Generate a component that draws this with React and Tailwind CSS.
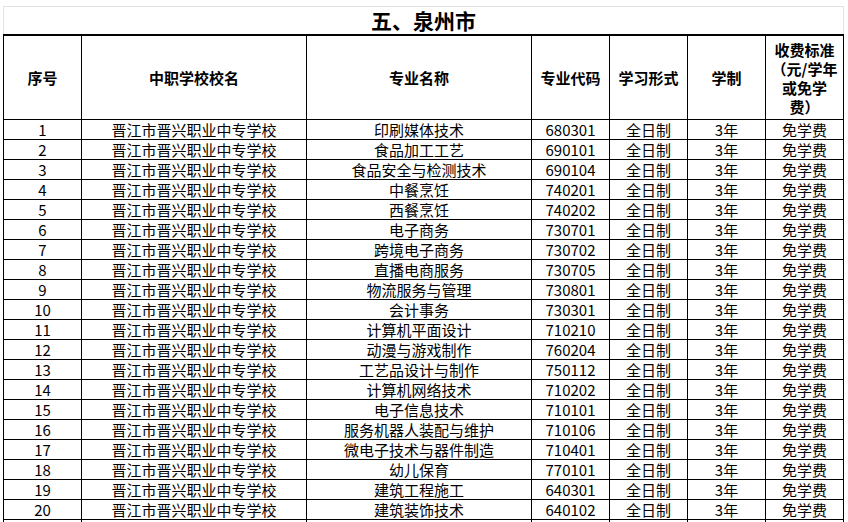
import React from "react";

const rows = [
  ["印刷媒体技术", "680301"],
  ["食品加工工艺", "690101"],
  ["食品安全与检测技术", "690104"],
  ["中餐烹饪", "740201"],
  ["西餐烹饪", "740202"],
  ["电子商务", "730701"],
  ["跨境电子商务", "730702"],
  ["直播电商服务", "730705"],
  ["物流服务与管理", "730801"],
  ["会计事务", "730301"],
  ["计算机平面设计", "710210"],
  ["动漫与游戏制作", "760204"],
  ["工艺品设计与制作", "750112"],
  ["计算机网络技术", "710202"],
  ["电子信息技术", "710101"],
  ["服务机器人装配与维护", "710106"],
  ["微电子技术与器件制造", "710401"],
  ["幼儿保育", "770101"],
  ["建筑工程施工", "640301"],
  ["建筑装饰技术", "640102"],
];

const font = { fontFamily: '"Noto Sans CJK SC", "Noto Sans", sans-serif' };

function Cell({ children, className = "" }) {
  return (
    <div
      className={`flex items-center justify-center border-r border-b border-black text-center ${className}`}
    >
      {children}
    </div>
  );
}

export default function App() {
  return (
    <div className="w-[848px] h-[522px] overflow-hidden bg-white text-black" style={font}>
      <div className="ml-[3px] mt-[6px] w-[841px]">
        <div className="h-[28px] border-t border-x border-[#e3e3e3] flex items-center justify-center text-[21px] leading-none font-bold">
          五、泉州市
        </div>
        <div className="grid grid-cols-[78px_225px_225px_78px_78px_78px_78px] border-t-2 border-l border-black">
          <Cell className="h-[84px] text-[15px] leading-none font-bold">序号</Cell>
          <Cell className="h-[84px] text-[15px] leading-none font-bold">中职学校校名</Cell>
          <Cell className="h-[84px] text-[15px] leading-none font-bold">专业名称</Cell>
          <Cell className="h-[84px] text-[15px] leading-none font-bold">专业代码</Cell>
          <Cell className="h-[84px] text-[15px] leading-none font-bold">学习形式</Cell>
          <Cell className="h-[84px] text-[15px] leading-none font-bold">学制</Cell>
          <Cell className="h-[84px] text-[15px] font-bold">
            <span className="block leading-[19px] pt-[1px]">
              收费标准
              <br />
              （元/学年
              <br />
              或免学
              <br />
              费）
            </span>
          </Cell>
          {rows.map(([major, code], i) => (
            <React.Fragment key={i}>
              <Cell className="h-[20px] text-[15px] leading-none">{i + 1}</Cell>
              <Cell className="h-[20px] text-[15px] leading-none">晋江市晋兴职业中专学校</Cell>
              <Cell className="h-[20px] text-[15px] leading-none">{major}</Cell>
              <Cell className="h-[20px] text-[15px] leading-none">{code}</Cell>
              <Cell className="h-[20px] text-[15px] leading-none">全日制</Cell>
              <Cell className="h-[20px] text-[15px] leading-none">3年</Cell>
              <Cell className="h-[20px] text-[15px] leading-none">免学费</Cell>
            </React.Fragment>
          ))}
          {Array.from({ length: 7 }).map((_, i) => (
            <Cell key={"e" + i} className="h-[20px]" />
          ))}
        </div>
      </div>
    </div>
  );
}
